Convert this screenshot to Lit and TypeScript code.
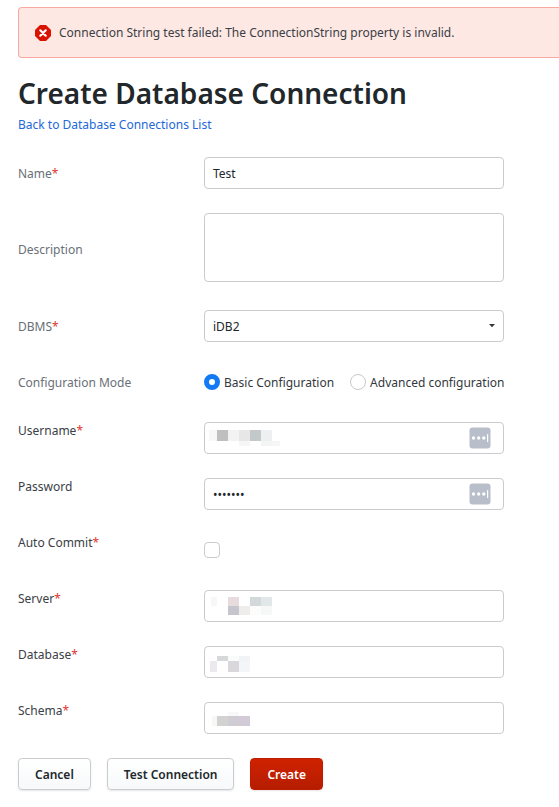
import { LitElement, html, css, svg, nothing } from "lit";
import { customElement, property } from "lit/decorators.js";

type Tile = [x: number, y: number, w: number, h: number, fill: string];

const USERNAME: Tile[] = [
  [5, 8, 8, 11, "#f7f7f7"], [13, 8, 11, 11, "#bfbfbf"], [24, 8, 11, 11, "#f3f3f3"],
  [35, 8, 11, 11, "#e7e7e7"], [46, 8, 11, 11, "#c3c8cb"], [57, 8, 11, 11, "#eeeff1"],
  [35, 19, 11, 5, "#f6f6f6"], [57, 19, 11, 5, "#f3f4f4"], [68, 19, 8, 5, "#f6f6f6"],
];
const SERVER: Tile[] = [
  [7, 7, 6, 9, "#f7f7f7"], [24, 7, 11, 9, "#e7dbdd"], [46, 7, 11, 9, "#d3d8da"],
  [57, 7, 11, 9, "#e2e7ea"], [24, 16, 11, 9, "#c6c4cc"], [35, 16, 11, 9, "#eeedec"],
  [46, 16, 11, 9, "#fcfcfc"], [57, 16, 11, 9, "#f6f8f8"],
];
const DATABASE: Tile[] = [
  [13, 10, 11, 5, "#d6d8d9"], [24, 10, 11, 5, "#fafcfc"], [35, 10, 11, 5, "#f2f3f6"],
  [6, 15, 7, 11, "#ebe9ed"], [24, 15, 11, 11, "#d9d7dc"], [35, 15, 11, 11, "#f3f5f8"],
];
const SCHEMA: Tile[] = [
  [24, 10, 11, 4, "#f8f8f9"], [8, 14, 5, 10, "#f7f7f7"], [13, 14, 11, 10, "#d2d3d1"],
  [24, 14, 11, 10, "#cfccd4"], [35, 14, 11, 10, "#d2cad6"],
];

@customElement("text-field")
class TextField extends LitElement {
  @property() value = "";
  @property({ attribute: false }) tiles: Tile[] = [];
  @property({ type: Boolean }) manager = false;
  @property({ type: Boolean }) arrow = false;

  static styles = css`
    :host { display: block; width: 300px; height: 32px; }
    .field {
      box-sizing: border-box; width: 100%; height: 100%; position: relative;
      display: flex; align-items: center; justify-content: space-between;
      border: 1px solid #c9cbcd; border-radius: 4px; background: #fff;
      padding: 0 7px 0 8px; color: #21272a;
    }
    .value { padding-top: 2px; }
    .tiles { position: absolute; left: -1px; top: -1px; }
    .manager { margin-left: auto; margin-right: 5px; }
  `;

  render() {
    return html`<div class="field">
      <span class="value">${this.value}</span>
      ${this.tiles.length
        ? html`<svg class="tiles" width="90" height="32" shape-rendering="crispEdges">
            ${this.tiles.map(([x, y, w, h, f]) => svg`<rect x=${x} y=${y} width=${w} height=${h} fill=${f}></rect>`)}
          </svg>`
        : nothing}
      ${this.manager
        ? html`<svg class="manager" width="22" height="22" viewBox="0 0 22 22">
            <rect x=".5" y=".5" width="21" height="21" rx="3" fill="#b8bfca"></rect>
            <g fill="#fff">
              <circle cx="4.5" cy="11" r="1.65"></circle><circle cx="9.7" cy="11" r="1.65"></circle>
              <circle cx="14.8" cy="11" r="1.65"></circle><rect x="18" y="7" width="1.2" height="8"></rect>
            </g>
          </svg>`
        : nothing}
      ${this.arrow
        ? html`<svg width="8" height="6" viewBox="0 0 8 6"><path d="M1 1h6L4 4.2z" fill="#33383c"></path></svg>`
        : nothing}
    </div>`;
  }
}

@customElement("app-root")
class AppRoot extends LitElement {
  static styles = css`
    :host {
      display: block; box-sizing: border-box; height: 807px; overflow: hidden;
      padding: 7px 0 0 18px; background: #fff; color: #3a4045;
      font: 12px/18px "Noto Sans", sans-serif;
    }
    .alert {
      box-sizing: border-box; height: 51px; display: flex; align-items: center;
      padding-left: 16px; gap: 8px; background: #fee8e4;
      border: 1px solid #f9a9a1; border-right: 0; border-radius: 4px 0 0 4px;
    }
    h1 { margin: 17px 0 0; font-size: 28px; line-height: 36px; font-weight: 600; color: #21272a; }
    .back { display: block; margin-top: 5px; color: #2268d8; text-decoration: none; }
    .form { margin-top: 23px; display: flex; flex-direction: column; gap: 24px; }
    .row { display: grid; grid-template-columns: 186px 1fr; align-items: center; }
    label { padding-top: 2px; }
    .muted { color: #697077; }
    .top { align-items: start; }
    .top label { padding-top: 0; }
    .tall label { padding-top: 4px; }
    .req { color: #e0372f; }
    .area { height: 69px; }
    .mode { height: 32px; }
    .dbms { margin-top: 4px; }
    .radios { display: flex; align-items: center; color: #33383c; }
    .radios span { padding-top: 2px; }
    .radio { box-sizing: border-box; width: 16px; height: 16px; border-radius: 50%; border: 1px solid #c6c9cc; margin-right: 4px; }
    .on { border: 5px solid #147af3; }
    .radios span + .radio { margin-left: 16px; }
    .check { display: block; box-sizing: border-box; width: 16px; height: 16px; margin: 8px 0; border: 1px solid #c9cbcd; border-radius: 4px; }
    .actions { display: flex; gap: 16px; margin-top: 24px; }
    button {
      box-sizing: border-box; height: 32px; padding: 2px 16px 0; font: 600 12px/18px "Noto Sans", sans-serif;
      color: #21272a; border: 1px solid #c9cdd0; border-radius: 4px;
      background: linear-gradient(#fff, #f7f9fa); box-shadow: 0 1px 2px #0000001a;
    }
    .primary { color: #fff; border-color: #bd1c00; background: linear-gradient(#cf2200, #b51d00); }
  `;

  private label(text: string, required: boolean) {
    return html`<label>${text}${required ? html`<span class="req">*</span>` : nothing}</label>`;
  }

  render() {
    return html`
      <div class="alert" role="alert">
        <svg width="16" height="16" viewBox="0 0 16 16">
          <path d="M5 0h6l5 5v6l-5 5H5l-5-5V5z" fill="#da1200"></path>
          <path d="M5.3 5.3l5.4 5.4M10.7 5.3l-5.4 5.4" stroke="#fff" stroke-width="2.2" stroke-linecap="round"></path>
        </svg>
        <span>Connection String test failed: The ConnectionString property is invalid.</span>
      </div>
      <h1>Create Database Connection</h1>
      <a class="back">Back to Database Connections List</a>
      <div class="form">
        <div class="row muted">${this.label("Name", true)}<text-field value="Test"></text-field></div>
        <div class="row muted tall">${this.label("Description", false)}<text-field class="area"></text-field></div>
        <div class="row muted dbms">${this.label("DBMS", true)}<text-field value="iDB2" arrow></text-field></div>
        <div class="row muted mode">
          ${this.label("Configuration Mode", false)}
          <div class="radios">
            <i class="radio on"></i><span>Basic Configuration</span>
            <i class="radio"></i><span>Advanced configuration</span>
          </div>
        </div>
        <div class="row top">${this.label("Username", true)}<text-field .tiles=${USERNAME} manager></text-field></div>
        <div class="row top">${this.label("Password", false)}<text-field value="•••••••" manager></text-field></div>
        <div class="row top">${this.label("Auto Commit", true)}<i class="check"></i></div>
        <div class="row top">${this.label("Server", true)}<text-field .tiles=${SERVER}></text-field></div>
        <div class="row top">${this.label("Database", true)}<text-field .tiles=${DATABASE}></text-field></div>
        <div class="row top">${this.label("Schema", true)}<text-field .tiles=${SCHEMA}></text-field></div>
      </div>
      <div class="actions">
        <button>Cancel</button><button>Test Connection</button><button class="primary">Create</button>
      </div>
    `;
  }
}
